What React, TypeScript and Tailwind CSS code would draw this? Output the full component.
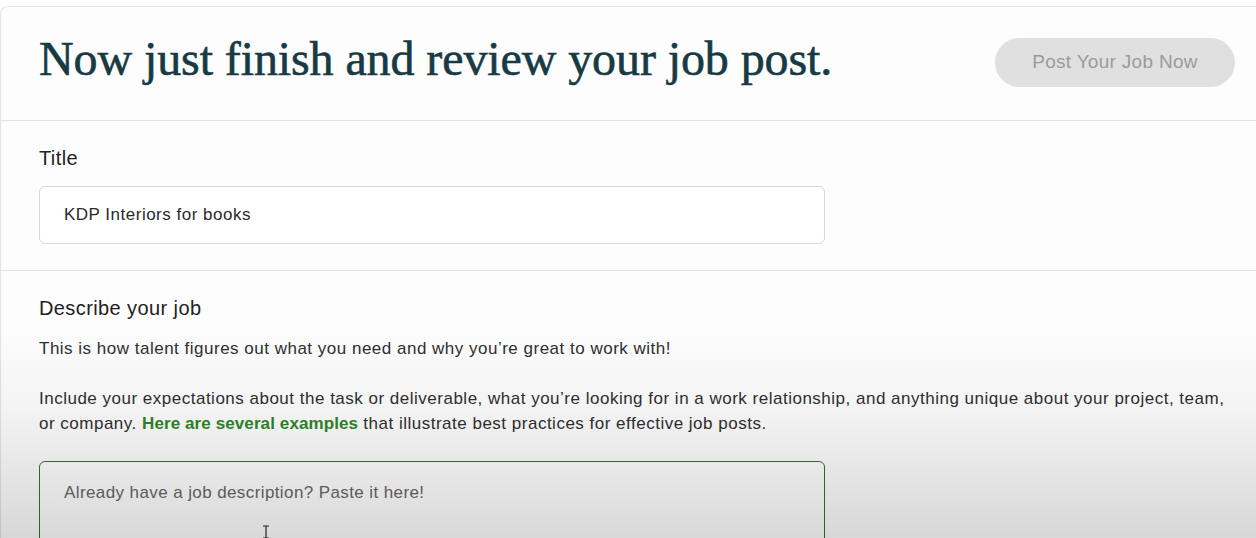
import React from "react";

export default function App() {
  return (
    <div
      className="relative w-[1256px] h-[538px] overflow-hidden bg-white pt-[6px]"
      style={{ fontFamily: '"Liberation Sans", Arial, sans-serif' }}
    >
      <div className="w-[1280px] border-l border-t border-[#e4e4e4] rounded-tl-[8px] bg-[#fdfdfd]">
        {/* Header */}
        <div className="flex items-center h-[114px] pl-[38px] pr-[45px] border-b border-[#e2e2e2]">
          <h1
            className="flex-1 text-[48px] leading-none text-[#173a44] tracking-[-0.1px] pb-[10px] [-webkit-text-stroke:0.6px_#173a44]"
            style={{ fontFamily: '"Liberation Serif", "Times New Roman", serif' }}
          >
            Now just finish and review your job post.
          </h1>
          <button className="w-[240px] h-[49px] rounded-full bg-[#e0e0e0] text-[#9b9b9b] text-[19px] tracking-[0.3px] mb-[3px]">
            Post Your Job Now
          </button>
        </div>

        {/* Title section */}
        <div className="h-[150px] border-b border-[#e2e2e2] pl-[38px] pt-[25px]">
          <div className="text-[20px] leading-[24px] tracking-[0.4px] text-[#222]">Title</div>
          <div className="mt-[16px] w-[786px] h-[58px] border border-[#d8d8d8] rounded-[6px] bg-white flex items-center pl-[24px] text-[17px] tracking-[0.5px] text-[#2a2a2a]">
            KDP Interiors for books
          </div>
        </div>

        {/* Describe section */}
        <div className="pl-[38px] pt-[25px]">
          <div className="text-[20px] leading-[24px] tracking-[0.4px] text-[#222]">Describe your job</div>
          <p className="mt-[16px] text-[17px] leading-[25px] tracking-[0.5px] text-[#2f2f2f]">
            This is how talent figures out what you need and why you’re great to work with!
          </p>
          <p className="mt-[25px] text-[17px] leading-[25px] tracking-[0.5px] text-[#2f2f2f] whitespace-nowrap">
            Include your expectations about the task or deliverable, what you’re looking for in a work relationship, and anything unique about your project, team,
            <br />
            or company. <span className="text-[#2e8529] font-bold tracking-[0.1px]">Here are several examples</span> that illustrate best practices for effective job posts.
          </p>
          <div className="relative mt-[25px] w-[786px] h-[120px] border border-[#3f6a38] rounded-[6px] bg-white pl-[24px] pt-[18px] text-[17px] tracking-[0.4px] text-[#666]">
            Already have a job description? Paste it here!
          </div>
        </div>
      </div>

      {/* bottom shade overlay */}
      <div className="pointer-events-none absolute inset-0 bg-[linear-gradient(to_bottom,rgba(0,0,0,0)_0%,rgba(0,0,0,0)_60%,rgba(0,0,0,0.04)_76%,rgba(0,0,0,0.15)_100%)]" />

      {/* text cursor */}
      <svg className="absolute left-[262px] top-[525px]" width="8" height="14" viewBox="0 0 8 14">
        <path d="M1 1h6M4 1v12M1 13h6" stroke="#222" strokeWidth="1.2" fill="none" />
      </svg>
    </div>
  );
}
